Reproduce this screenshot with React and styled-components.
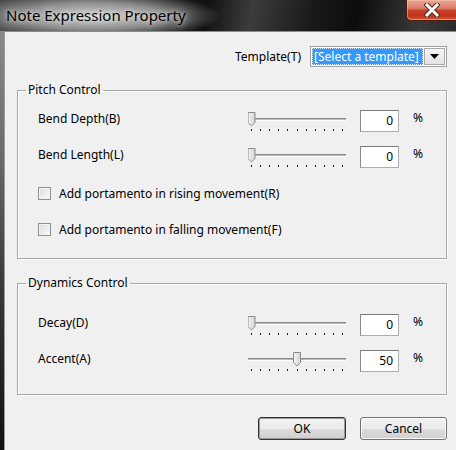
import React from "react";
import styled, { createGlobalStyle } from "styled-components";

const Global = createGlobalStyle`
  html, body { margin: 0; padding: 0; width: 456px; height: 450px; overflow: hidden; background: #f0f0f0; }
  body { font-family: "Noto Sans", "Liberation Sans", sans-serif; font-size: 12px; color: #000; }
  * { box-sizing: border-box; }
`;

const Window = styled.div`
  width: 456px;
  height: 450px;
  display: flex;
  flex-direction: column;
`;

const TitleBar = styled.div`
  height: 31px;
  flex: none;
  display: flex;
  align-items: flex-start;
  justify-content: space-between;
  background:
    radial-gradient(ellipse 125px 24px at 96px 16px, rgba(215,215,215,0.95) 0%, rgba(180,180,180,0.7) 55%, rgba(120,120,120,0) 100%),
    linear-gradient(100deg, #4a4a4a 0%, #2a2a2a 30%, #111 45%, #3c3c3c 55%, #1a1a1a 68%, #0c0c0c 78%, #3a3a3a 92%, #2a2a2a 100%);
`;

const Title = styled.div`
  font-size: 15px;
  line-height: 31px;
  padding-left: 6px;
  color: #000;
  text-shadow: 0 0 8px rgba(255,255,255,0.8), 0 0 4px rgba(255,255,255,0.6);
`;

const CloseButton = styled.div`
  width: 52px;
  height: 21px;
  margin-right: -2px;
  border: 1px solid #4a1a10;
  border-top: none;
  border-radius: 0 0 0 5px;
  background: linear-gradient(#e9a898 0%, #dc7b66 42%, #c9402a 52%, #c2341c 80%, #d45a38 100%);
  box-shadow: inset 0 0 0 1px rgba(255,200,180,0.5);
  display: flex;
  align-items: center;
  justify-content: center;
`;

const Body = styled.div`
  flex: 1;
  display: flex;
`;

const Frame = styled.div`
  width: 4px;
  flex: none;
  background: linear-gradient(#8a8a8a 0%, #6a6a6a 30%, #3a3a3a 60%, #101010 100%);
`;

const Client = styled.div`
  flex: 1;
  background: #f0f0f0;
  border-top: 1px solid #8c8c8c;
  border-left: 1px solid #9a9a9a;
  padding: 0 9px 0 12px;
  display: flex;
  flex-direction: column;
`;

const TemplateRow = styled.div`
  margin-top: 14px;
  height: 21px;
  display: flex;
  justify-content: flex-end;
  align-items: center;
  gap: 9px;
`;

const Select = styled.div`
  width: 137px;
  height: 21px;
  border: 1px solid #a0a0a0;
  background: #fff;
  display: flex;
  padding: 1px;
`;

const SelectValue = styled.div`
  flex: 1;
  background: #3399ff;
  color: #fff;
  line-height: 17px;
  padding-left: 2px;
  outline: 1px dotted #cfe6ff;
  outline-offset: -1px;
  white-space: nowrap;
  overflow: hidden;
`;

const SelectArrow = styled.div`
  width: 21px;
  margin-left: 1px;
  border: 1px solid #a8a8a8;
  background: linear-gradient(#f6f6f6, #e2e2e2);
  display: flex;
  align-items: center;
  justify-content: center;
`;

const Group = styled.fieldset`
  margin: ${(p) => p.$mt}px 0 0 0;
  padding: ${(p) => p.$pt}px 0 ${(p) => p.$pb}px 8px;
  border: 1px solid #a8a8a8;
  box-shadow: 1px 1px 0 #fff, inset 1px 1px 0 #fff;
  min-width: 0;
`;

const Legend = styled.legend`
  padding: 0 2px;
  line-height: 16px;
  font-size: 12px;
`;

const GroupBody = styled.div`
  padding-left: 12px;
`;

const SliderRow = styled.div`
  height: 36px;
  display: grid;
  grid-template-columns: 210px 112px 53px auto;
  align-items: center;
`;

const RowLabel = styled.span`
  line-height: 16px;
`;

const ValueBox = styled.div`
  width: 39px;
  height: 22px;
  margin-top: 3px;
  background: #fff;
  border: 1px solid #abadb3;
  border-top-color: #7a7a7a;
  border-left-color: #8a8a8a;
  text-align: right;
  padding-right: 5px;
  line-height: 20px;
`;

const Percent = styled.span`
  margin-top: -3px;
`;

const CheckList = styled.div`
  padding-top: 2px;
`;

const CheckRow = styled.label`
  height: 36px;
  display: flex;
  align-items: center;
  gap: 8px;
`;

const Box = styled.span`
  width: 13px;
  height: 13px;
  border: 1px solid #8e8f8f;
  background: linear-gradient(135deg, #dcdcdc, #fbfbfb);
  box-shadow: inset 0 0 0 1px #f4f4f4;
`;

const ButtonRow = styled.div`
  margin-top: 22px;
  display: flex;
  justify-content: flex-end;
  gap: 14px;
`;

const Button = styled.button`
  width: ${(p) => p.$w}px;
  height: 23px;
  font-family: inherit;
  font-size: 12px;
  color: #000;
  border: 1px solid ${(p) => (p.$default ? "#333" : "#707070")};
  border-radius: 3px;
  background: linear-gradient(#f2f2f2 0%, #ebebeb 50%, #dddddd 51%, #cfcfcf 100%);
  box-shadow: inset 0 0 0 1px ${(p) => (p.$default ? "#9a9a9a" : "#fcfcfc")};
  padding: 0;
`;

function Slider({ value }) {
  const cx = 3.5 + (value / 100) * 91;
  const ticks = Array.from({ length: 11 }, (_, i) => 3.5 + i * 9.1);
  const x0 = cx - 4;
  return (
    <svg width="100" height="36" viewBox="0 0 100 36">
      <defs>
        <linearGradient id="thumbg" x1="0" x2="1">
          <stop offset="0" stopColor="#f4f4f4" />
          <stop offset="1" stopColor="#d4d4d4" />
        </linearGradient>
      </defs>
      <rect x="0" y="17" width="98" height="1" fill="#8a8a8a" />
      <rect x="0" y="18" width="98" height="1" fill="#b8b8b8" />
      <rect x="0" y="19" width="98" height="1" fill="#ffffff" />
      {ticks.map((t, i) => (
        <rect key={i} x={Math.round(t - 0.5)} y="28" width="1" height="2" fill="#222" />
      ))}
      <path
        d={`M${x0 + 0.5} 11.5 H${x0 + 7.5} V21.5 L${cx} 25 L${x0 + 0.5} 21.5 Z`}
        fill="url(#thumbg)"
        stroke="#8c8c8c"
        strokeWidth="1"
      />
    </svg>
  );
}

function SliderField({ label, value }) {
  return (
    <SliderRow>
      <RowLabel>{label}</RowLabel>
      <Slider value={value} />
      <ValueBox>{value}</ValueBox>
      <Percent>%</Percent>
    </SliderRow>
  );
}

export default function App() {
  return (
    <>
      <Global />
      <Window>
        <TitleBar>
          <Title>Note Expression Property</Title>
          <CloseButton>
            <svg width="16" height="14" viewBox="0 0 16 14">
              <path d="M3 2 L13 12 M13 2 L3 12" stroke="#4a2a22" strokeWidth="5" strokeLinecap="square" />
              <path d="M3 2 L13 12 M13 2 L3 12" stroke="#ffffff" strokeWidth="3" strokeLinecap="square" />
            </svg>
          </CloseButton>
        </TitleBar>
        <Body>
          <Frame />
          <Client>
            <TemplateRow>
              <span>Template(T)</span>
              <Select>
                <SelectValue>[Select a template]</SelectValue>
                <SelectArrow>
                  <svg width="9" height="5" viewBox="0 0 9 5">
                    <path d="M0 0 H9 L4.5 5 Z" fill="#000" />
                  </svg>
                </SelectArrow>
              </Select>
            </TemplateRow>
            <Group $mt={15} $pt={3} $pb={11}>
              <Legend>Pitch Control</Legend>
              <GroupBody>
                <SliderField label="Bend Depth(B)" value={0} />
                <SliderField label="Bend Length(L)" value={0} />
                <CheckList>
                  <CheckRow>
                    <Box />
                    <span>Add portamento in rising movement(R)</span>
                  </CheckRow>
                  <CheckRow>
                    <Box />
                    <span>Add portamento in falling movement(F)</span>
                  </CheckRow>
                </CheckList>
              </GroupBody>
            </Group>
            <Group $mt={16} $pt={14} $pb={17}>
              <Legend>Dynamics Control</Legend>
              <GroupBody>
                <SliderField label="Decay(D)" value={0} />
                <SliderField label="Accent(A)" value={50} />
              </GroupBody>
            </Group>
            <ButtonRow>
              <Button $w={88} $default>OK</Button>
              <Button $w={87}>Cancel</Button>
            </ButtonRow>
          </Client>
        </Body>
      </Window>
    </>
  );
}
